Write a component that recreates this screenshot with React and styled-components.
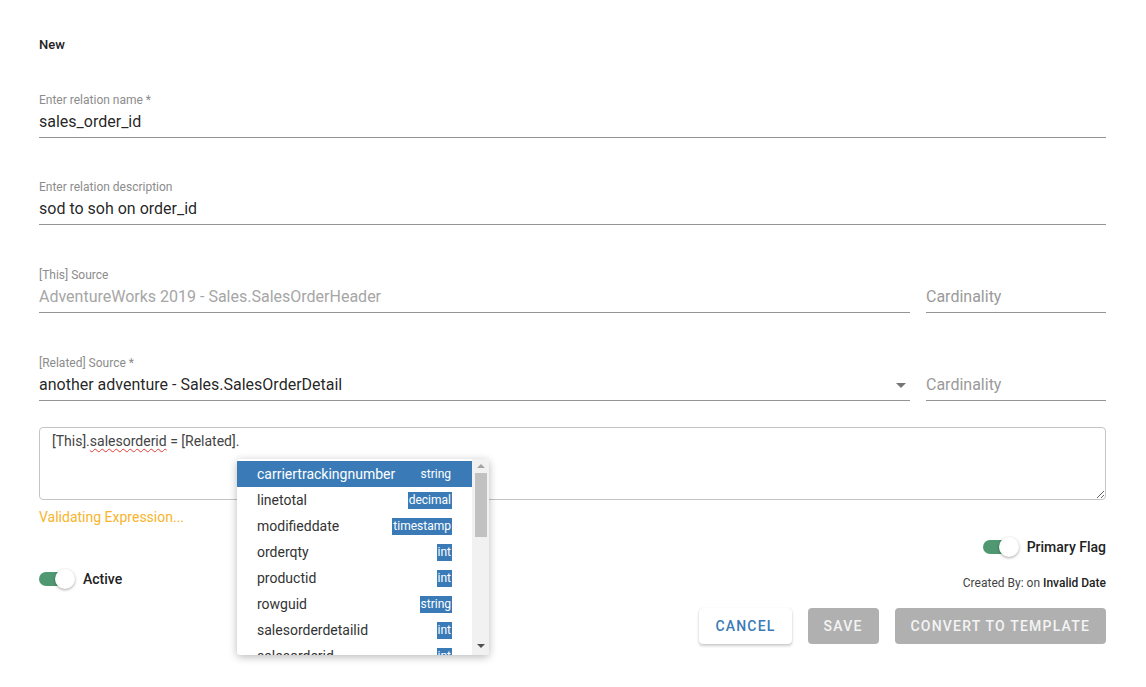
import React from "react";
import styled, { createGlobalStyle } from "styled-components";

const GlobalStyle = createGlobalStyle`
  body {
    margin: 0;
    background: #fff;
    font-family: Roboto, "Liberation Sans", sans-serif;
    color: rgba(0, 0, 0, 0.87);
  }
`;

const columns = [
  { name: "carriertrackingnumber", type: "string" },
  { name: "linetotal", type: "decimal" },
  { name: "modifieddate", type: "timestamp" },
  { name: "orderqty", type: "int" },
  { name: "productid", type: "int" },
  { name: "rowguid", type: "string" },
  { name: "salesorderdetailid", type: "int" },
  { name: "salesorderid", type: "int" },
];

function Field({ label, value, placeholder, disabled, select, grow }) {
  return (
    <FieldBox $grow={grow}>
      <Label>{label || "\u00a0"}</Label>
      <InputRow>
        <Value $disabled={disabled} $placeholder={!value}>
          {value || placeholder}
        </Value>
        {select && <Caret />}
      </InputRow>
    </FieldBox>
  );
}

function Toggle({ label }) {
  return (
    <ToggleBox>
      <Track>
        <Knob />
      </Track>
      <ToggleLabel>{label}</ToggleLabel>
    </ToggleBox>
  );
}

function Suggestions() {
  return (
    <Menu>
      <MenuList>
        {columns.map((c, i) => (
          <MenuItem key={c.name} $active={i === 0}>
            <span>{c.name}</span>
            <TypeBadge>{c.type}</TypeBadge>
          </MenuItem>
        ))}
      </MenuList>
      <ScrollBar>
        <ScrollArrow $up />
        <ScrollThumb />
        <ScrollArrow />
      </ScrollBar>
    </Menu>
  );
}

export default function App() {
  return (
    <>
      <GlobalStyle />
      <Page>
        <Title>New</Title>
        <Field label="Enter relation name *" value="sales_order_id" />
        <Field label="Enter relation description" value="sod to soh on order_id" />
        <Row>
          <Field
            grow
            label="[This] Source"
            value="AdventureWorks 2019 - Sales.SalesOrderHeader"
            disabled
          />
          <Cardinality>
            <Field placeholder="Cardinality" />
          </Cardinality>
        </Row>
        <Row>
          <Field
            grow
            select
            label="[Related] Source *"
            value="another adventure - Sales.SalesOrderDetail"
          />
          <Cardinality>
            <Field placeholder="Cardinality" />
          </Cardinality>
        </Row>
        <ExpressionWrap>
          <Expression>
            [This].<Misspelled>salesorderid</Misspelled> = [Related].
          </Expression>
          <Suggestions />
        </ExpressionWrap>
        <Status>Validating Expression...</Status>
        <FlagsRow>
          <Toggle label="Active" />
          <RightCol>
            <Toggle label="Primary Flag" />
            <Meta>
              Created By: on <b>Invalid Date</b>
            </Meta>
          </RightCol>
        </FlagsRow>
        <Actions>
          <Button $variant="outline">Cancel</Button>
          <Button $variant="disabled">Save</Button>
          <Button $variant="disabled">Convert to template</Button>
        </Actions>
      </Page>
    </>
  );
}

const Page = styled.div`
  padding: 37px 40px 40px 39px;
  display: flex;
  flex-direction: column;
`;

const Title = styled.div`
  font-size: 13px;
  font-weight: 500;
  line-height: 15px;
  color: #222;
  margin-bottom: 41px;
`;

const FieldBox = styled.div`
  flex: ${(p) => (p.$grow ? "1" : "none")};
  margin-bottom: 42px;
`;

const Label = styled.div`
  font-size: 12px;
  line-height: 15px;
  color: #8c8c8c;
`;

const InputRow = styled.div`
  display: flex;
  align-items: center;
  padding: 4px 0 5px;
  border-bottom: 1px solid #949494;
`;

const Value = styled.div`
  flex: 1;
  font-size: 16px;
  line-height: 20px;
  color: ${(p) =>
    p.$disabled ? "#a6a6a6" : p.$placeholder ? "#9a9a9a" : "rgba(0,0,0,0.87)"};
`;

const Caret = styled.div`
  width: 0;
  height: 0;
  border-left: 5px solid transparent;
  border-right: 5px solid transparent;
  border-top: 5px solid #757575;
  margin-right: 4px;
`;

const Row = styled.div`
  display: flex;
  gap: 16px;
  padding-top: 1px;
`;

const Cardinality = styled.div`
  width: 180px;
`;

const ExpressionWrap = styled.div`
  position: relative;
  margin-top: -16px;
`;

const Expression = styled.div`
  height: 59px;
  padding: 5px 12px 7px 12px;
  border: 1px solid #c4c4c4;
  border-radius: 4px;
  font-size: 14px;
  line-height: 17px;
  color: #444;
  resize: vertical;
  overflow: auto;
`;

const Misspelled = styled.span`
  text-decoration: underline wavy #e53935;
  text-decoration-thickness: 1px;
  text-underline-offset: 2px;
`;

const Menu = styled.div`
  position: absolute;
  left: 198px;
  top: 32px;
  width: 252px;
  height: 196px;
  display: flex;
  background: #fff;
  border-radius: 3px;
  box-shadow: 0 2px 8px rgba(0, 0, 0, 0.28);
  overflow: hidden;
  z-index: 2;
`;

const MenuList = styled.div`
  flex: 1;
  padding-top: 2px;
`;

const MenuItem = styled.div`
  height: 26px;
  display: flex;
  align-items: center;
  justify-content: space-between;
  padding: 0 20px;
  font-size: 14px;
  color: ${(p) => (p.$active ? "#fff" : "#333")};
  background: ${(p) => (p.$active ? "#3a7bb7" : "transparent")};
`;

const TypeBadge = styled.span`
  background: #3a7bb7;
  color: #fff;
  font-size: 12px;
  line-height: 17px;
  padding: 0 1px;
`;

const ScrollBar = styled.div`
  width: 17px;
  background: #f1f1f1;
  display: flex;
  flex-direction: column;
  align-items: center;
`;

const ScrollThumb = styled.div`
  width: 12px;
  height: 64px;
  background: #c1c1c1;
  margin-bottom: auto;
`;

const ScrollArrow = styled.div`
  width: 0;
  height: 0;
  margin: ${(p) => (p.$up ? "5px 0 5px" : "0 0 7px")};
  border-left: 4px solid transparent;
  border-right: 4px solid transparent;
  ${(p) =>
    p.$up
      ? "border-bottom: 4px solid #a3a3a3;"
      : "border-top: 4px solid #505050;"}
`;

const Status = styled.div`
  margin-top: 7px;
  font-size: 14px;
  line-height: 20px;
  color: #f7b42c;
`;

const FlagsRow = styled.div`
  display: flex;
  justify-content: space-between;
  align-items: flex-end;
`;

const RightCol = styled.div`
  display: flex;
  flex-direction: column;
  align-items: flex-end;
  margin-top: 8px;
`;

const ToggleBox = styled.div`
  display: flex;
  align-items: center;
  height: 24px;
`;

const Track = styled.div`
  position: relative;
  width: 26px;
  height: 14px;
  border-radius: 7px;
  background: #4f9872;
  margin-right: 18px;
`;

const Knob = styled.div`
  position: absolute;
  left: 16px;
  top: -3px;
  width: 20px;
  height: 20px;
  border-radius: 50%;
  background: #fff;
  box-shadow: 0 1px 3px rgba(0, 0, 0, 0.35);
`;

const ToggleLabel = styled.span`
  font-size: 14px;
  font-weight: 500;
  color: #222;
`;

const Meta = styled.div`
  margin-top: 16px;
  font-size: 12px;
  line-height: 16px;
  color: #444;

  b {
    font-weight: 500;
    color: #222;
  }
`;

const Actions = styled.div`
  display: flex;
  justify-content: flex-end;
  gap: 16px;
  margin-top: 17px;
`;

const Button = styled.button`
  height: 36px;
  padding: 0 16px;
  border: none;
  border-radius: 4px;
  font-family: Roboto, "Liberation Sans", sans-serif;
  font-size: 14px;
  font-weight: 500;
  letter-spacing: 1.2px;
  text-transform: uppercase;
  color: ${(p) => (p.$variant === "outline" ? "#3a7bb7" : "#f4f4f4")};
  background: ${(p) => (p.$variant === "outline" ? "#fff" : "#b0b0b0")};
  box-shadow: ${(p) =>
    p.$variant === "outline"
      ? "0 2px 3px rgba(0,0,0,0.2), 0 0 1px rgba(0,0,0,0.15)"
      : "none"};
`;
